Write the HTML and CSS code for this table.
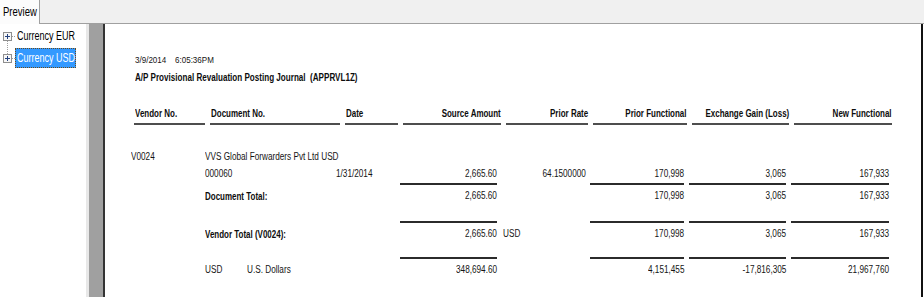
FILE: index.html
```html
<!DOCTYPE html>
<html>
<head>
<meta charset="utf-8">
<link rel="stylesheet" href="styles.css">
</head>
<body>
<div class="tabbar">
  <div class="tab"><span class="s st">Preview</span></div>
  <div class="tabfill"></div>
</div>
<div class="main">
  <div class="tree">
    <div class="node">
      <svg width="15" height="22" viewBox="0 0 15 22">
        <path d="M7.5 16V22" stroke="#a0a0a0" stroke-dasharray="1 1"/>
        <path d="M12 11.5H15" stroke="#a0a0a0" stroke-dasharray="1 1"/>
        <rect x="3.5" y="7.5" width="8" height="8" fill="#f7f7f7" stroke="#8f8f8f"/>
        <path d="M5 11.5H10M7.5 9V14" stroke="#24427e"/>
      </svg>
      <div class="label"><span class="s sl">Currency EUR</span></div>
    </div>
    <div class="node">
      <svg width="15" height="22" viewBox="0 0 15 22">
        <path d="M7.5 0V7" stroke="#a0a0a0" stroke-dasharray="1 1"/>
        <path d="M12 11.5H15" stroke="#a0a0a0" stroke-dasharray="1 1"/>
        <rect x="3.5" y="7.5" width="8" height="8" fill="#f7f7f7" stroke="#8f8f8f"/>
        <path d="M5 11.5H10M7.5 9V14" stroke="#24427e"/>
      </svg>
      <div class="label sel"><span class="s sl">Currency USD</span></div>
    </div>
  </div>
  <div class="split"></div>
  <div class="gutter"></div>
  <div class="page">
    <div class="head">
      <div class="stamp"><span class="d1"><span class="s">3/9/2014</span></span><span class="s">6:05:36PM</span></div>
      <div class="title"><span class="s sb">A/P Provisional Revaluation Posting Journal&nbsp; (APPRVL1Z)</span></div>
    </div>
    <div class="cols">
      <div class="ch l"><span class="s sb">Vendor No.</span></div>
      <div class="ch l"><span class="s sb">Document No.</span></div>
      <div class="ch l"><span class="s sb">Date</span></div>
      <div class="ch r"><span class="s sb">Source Amount</span></div>
      <div class="ch r"><span class="s sb">Prior Rate</span></div>
      <div class="ch r"><span class="s sb">Prior Functional</span></div>
      <div class="ch r"><span class="s sb">Exchange Gain (Loss)</span></div>
      <div class="ch r"><span class="s sb">New Functional</span></div>
    </div>

    <div class="data">
      <div class="drow first">
        <div><span class="s">V0024</span></div>
        <div><span class="s">VVS Global Forwarders Pvt Ltd USD</span></div>
      </div>
      <div class="drow">
        <div></div>
        <div><span class="s">000060</span></div>
        <div><span class="s">1/31/2014</span></div>
        <div class="r"><span class="s">2,665.60</span></div>
        <div class="r rate"><span class="s">64.1500000</span></div>
        <div class="r"><span class="s">170,998</span></div>
        <div class="r"><span class="s">3,065</span></div>
        <div class="r"><span class="s">167,933</span></div>
      </div>
      <div class="rule r1">
        <div class="ln c4"></div><div class="ln c6"></div><div class="ln c7"></div><div class="ln c8"></div>
      </div>
      <div class="drow">
        <div></div>
        <div><span class="s sb">Document Total:</span></div>
        <div></div>
        <div class="r"><span class="s">2,665.60</span></div>
        <div></div>
        <div class="r"><span class="s">170,998</span></div>
        <div class="r"><span class="s">3,065</span></div>
        <div class="r"><span class="s">167,933</span></div>
      </div>
      <div class="rule r2">
        <div class="ln c4"></div><div class="ln c6"></div><div class="ln c7"></div><div class="ln c8"></div>
      </div>
      <div class="drow">
        <div></div>
        <div><span class="s sb">Vendor Total (V0024):</span></div>
        <div></div>
        <div class="r"><span class="s">2,665.60</span></div>
        <div class="cur"><span class="s">USD</span></div>
        <div class="r"><span class="s">170,998</span></div>
        <div class="r"><span class="s">3,065</span></div>
        <div class="r"><span class="s">167,933</span></div>
      </div>
      <div class="rule r3">
        <div class="ln c4"></div><div class="ln c6"></div><div class="ln c7"></div><div class="ln c8"></div>
      </div>
      <div class="drow">
        <div></div>
        <div class="pair"><span class="code"><span class="s">USD</span></span><span class="s">U.S. Dollars</span></div>
        <div></div>
        <div class="r"><span class="s">348,694.60</span></div>
        <div></div>
        <div class="r"><span class="s">4,151,455</span></div>
        <div class="r"><span class="s">-17,816,305</span></div>
        <div class="r"><span class="s">21,967,760</span></div>
      </div>
    </div>
  </div>
  <div class="edge"></div>
</div>
</body>
</html>
```
FILE: styles.css
```css
* { box-sizing: border-box; }
html, body { margin: 0; padding: 0; }
body {
  width: 924px;
  height: 297px;
  overflow: hidden;
  background: #fff;
  font-family: "Liberation Sans", Arial, sans-serif;
  color: #141414;
}
.s {
  display: inline-block;
  white-space: nowrap;
  transform: scaleX(0.82);
  transform-origin: 0 50%;
}
.sb { font-weight: bold; transform: scaleX(0.77); }
.sl { transform: scaleX(0.72); }
.st { transform: scaleX(0.76); }

/* tab bar */
.tabbar { display: flex; height: 24px; }
.tab {
  width: 40px;
  background: #fcfcfc;
  border-right: 1px solid #a0a0a0;
  display: flex;
  align-items: center;
  padding-left: 3px;
  font-size: 12.5px;
  color: #000;
}
.tabfill { flex: 1; background: #f0f0f0; border-bottom: 1px solid #a0a0a0; }

/* main */
.main { display: flex; height: 273px; }
.tree { width: 86px; padding-top: 1px; }
.node { display: flex; height: 22px; align-items: center; }
.node svg { flex: none; display: block; }
.label {
  height: 20px;
  width: 61px;
  display: flex;
  align-items: center;
  padding: 0 2px;
  font-size: 12.5px;
  color: #000;
  overflow: visible;
}
.label.sel {
  background: #3399ff;
  color: #fff;
  outline: 1px dotted #6b4a1a;
  outline-offset: -1px;
}
.split { width: 3px; background: #e8e8e8; }
.gutter { width: 16px; background: #a0a0a0; border-right: 2px solid #333; }
.page { width: 816px; padding-top: 30px; }
.edge { width: 2px; background: #111; }

/* report header */
.head { margin-left: 30px; font-size: 9.8px; line-height: 12px; }
.stamp { display: flex; height: 12px; }
.d1 { width: 40px; flex: none; }
.title { margin-top: 5px; height: 12px; font-size: 10.5px; color: #0d0d0d; }

.cols {
  margin-left: 29px;
  margin-top: 24px;
  display: grid;
  grid-template-columns: 71px 130px 53px 98px 82px 94px 97px 98px;
  column-gap: 5px;
}
.ch {
  font-size: 10.5px;
  line-height: 12px;
  padding-bottom: 4px;
  border-bottom: 2px solid #4e4e4e;
  color: #0d0d0d;
}
.ch .sb { transform: scaleX(0.76); }
.ch.l { padding-left: 1px; }
.r { display: flex; justify-content: flex-end; }
.r .s { transform-origin: 100% 50%; }

/* data */
.data { margin-left: 26px; margin-top: 26px; }
.drow, .rule {
  display: grid;
  grid-template-columns: 74px 131px 64px 97px 93px 94px 102px 103px;
}
.drow { height: 12px; font-size: 10px; line-height: 12px; margin-top: 5px; }
.drow.first { margin-top: 0; }
.drow .sb { font-size: 10.5px; color: #0d0d0d; transform: scaleX(0.76); }
.rate { padding-right: 4px; }
.cur { padding-left: 6px; }
.pair { display: flex; }
.code { width: 42px; flex: none; }

.rule { height: 2px; }
.r1 { margin-top: 3px; }
.r2 { margin-top: 19px; }
.r3 { margin-top: 17px; }
.ln { height: 2px; background: #2b2b2b; }
.c4 { grid-column: 4; }
.c6 { grid-column: 6; }
.c7 { grid-column: 7; margin-left: 5px; }
.c8 { grid-column: 8; margin-left: 5px; }
```
